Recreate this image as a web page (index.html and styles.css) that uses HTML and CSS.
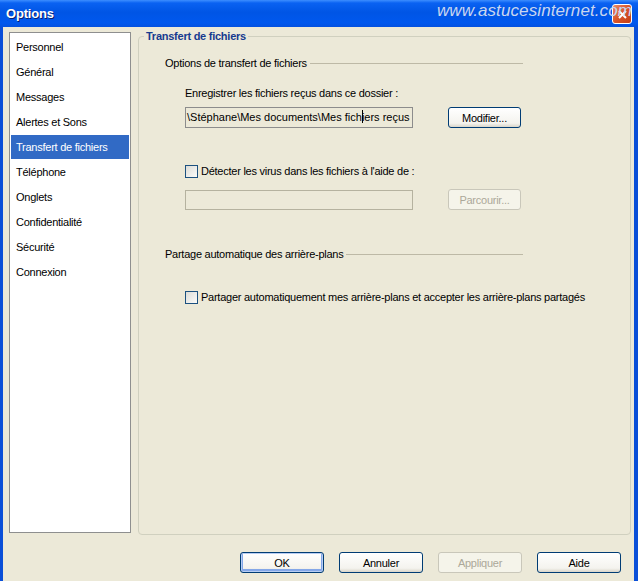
FILE: index.html
```html
<!DOCTYPE html>
<html lang="fr">
<head>
  <meta charset="UTF-8">
  <title>Options</title>
  <link rel="stylesheet" href="styles.css">
</head>
<body>
  <div class="window">
    <div class="titlebar">
      <span class="title">Options</span>
      <span class="close-btn">
        <svg width="13" height="13" viewBox="0 0 13 13"><path d="M3 3 L10 10 M10 3 L3 10" stroke="#fff" stroke-width="2"/></svg>
      </span>
      <span class="watermark">www.astucesinternet.com</span>
    </div>

    <div class="frame">
      <div class="main">
        <ul class="nav">
          <li>Personnel</li>
          <li>Général</li>
          <li>Messages</li>
          <li>Alertes et Sons</li>
          <li class="selected">Transfert de fichiers</li>
          <li>Téléphone</li>
          <li>Onglets</li>
          <li>Confidentialité</li>
          <li>Sécurité</li>
          <li>Connexion</li>
        </ul>

        <fieldset class="group">
          <legend>Transfert de fichiers</legend>

          <div class="section">
            <div class="section-head"><span>Options de transfert de fichiers</span><span class="rule"></span></div>

            <div class="indent">
              <div class="label first-label">Enregistrer les fichiers reçus dans ce dossier :</div>
              <div class="field-row">
                <div class="textbox readonly">\Stéphane\Mes documents\Mes fich<span class="caret"></span>iers reçus</div>
                <button class="btn small">Modifier...</button>
              </div>

              <div class="check-row virus-row">
                <span class="checkbox"></span>
                <span>Détecter les virus dans les fichiers à l'aide de :</span>
              </div>
              <div class="field-row disabled-row">
                <div class="textbox disabled"></div>
                <button class="btn small" disabled>Parcourir...</button>
              </div>
            </div>

            <div class="section-head share-head"><span>Partage automatique des arrière-plans</span><span class="rule"></span></div>

            <div class="indent">
              <div class="check-row share-row">
                <span class="checkbox"></span>
                <span>Partager automatiquement mes arrière-plans et accepter les arrière-plans partagés</span>
              </div>
            </div>
          </div>
        </fieldset>
      </div>

      <div class="buttons">
        <button class="btn default">OK</button>
        <button class="btn">Annuler</button>
        <button class="btn" disabled>Appliquer</button>
        <button class="btn">Aide</button>
      </div>
    </div>
  </div>
</body>
</html>
```

FILE: styles.css
```css
* {
  box-sizing: border-box;
}

body {
  margin: 0;
  background: #ece9d8;
  font-family: 'Liberation Sans', Arial, sans-serif;
  font-size: 11px;
  letter-spacing: -0.25px;
  color: #000;
}

.window {
  width: 638px;
  height: 581px;
  overflow: hidden;
}

.titlebar {
  position: relative;
  height: 27px;
  display: flex;
  align-items: center;
  padding: 0 6px 0 6px;
  background: linear-gradient(to bottom, #3d8eff 0, #0a62f2 3px, #0055e5 45%, #0058ee 85%, #0351e0 100%);
}

.title {
  flex: 1;
  color: #fff;
  font-weight: bold;
  font-size: 13px;
  letter-spacing: -0.2px;
  text-shadow: 1px 1px 0 #0a1e70;
}

.close-btn {
  width: 20px;
  height: 20px;
  margin-top: 1px;
  border: 1px solid #fff;
  border-radius: 3px;
  background: linear-gradient(135deg, #e98a6a, #d8542a 50%, #c33f16);
  display: flex;
  align-items: center;
  justify-content: center;
}

.watermark {
  position: absolute;
  right: 6px;
  top: 1px;
  color: #c9d6ef;
  font-style: italic;
  font-size: 17px;
  letter-spacing: 0.1px;
}

.frame {
  height: 554px;
  border-left: 3px solid #0a4fd8;
  border-right: 4px solid #0a4fd8;
}

.main {
  display: flex;
  padding: 3px 0 0 6px;
}

.nav {
  list-style: none;
  margin: 2px 0 0 0;
  padding: 2px 1px;
  width: 122px;
  height: 501px;
  background: #fff;
  border: 1px solid #8e8f8f;
}

.nav li {
  height: 24px;
  line-height: 25px;
  margin-bottom: 1px;
  padding-left: 5px;
  white-space: nowrap;
}

.nav li.selected {
  background: #316ac5;
  color: #fff;
}

.group {
  margin: 0 0 0 7px;
  padding: 0;
  width: 493px;
  height: 505px;
  border: 1px solid #d0d0bf;
  border-radius: 4px;
  min-width: 0;
}

.group legend {
  margin-left: 5px;
  padding: 0 2px;
  line-height: 13px;
  font-weight: bold;
  color: #163b8f;
}

.section {
  padding-left: 26px;
}

.section-head {
  display: flex;
  align-items: center;
  width: 358px;
  margin-top: 13px;
  line-height: 14px;
}

.section-head .rule {
  flex: 1;
  height: 0;
  border-top: 1px solid #bdb9a6;
  margin-left: 3px;
}

.share-head {
  margin-top: 37px;
}

.indent {
  padding-left: 20px;
}

.label {
  line-height: 14px;
}

.first-label {
  margin-top: 16px;
}

.field-row {
  display: flex;
  align-items: center;
  margin-top: 7px;
  height: 21px;
}

.disabled-row {
  margin-top: 11px;
}

.textbox {
  width: 228px;
  height: 21px;
  border: 1px solid #8c8c8c;
  padding: 0 1px;
  line-height: 19px;
  letter-spacing: 0;
  white-space: nowrap;
  overflow: hidden;
}

.textbox.readonly {
  background: #ece9d8;
}

.textbox.disabled {
  height: 20px;
  background: #ece9d8;
  border-color: #b5b29f;
}

.caret {
  display: inline-block;
  width: 1px;
  height: 13px;
  margin-right: -1px;
  vertical-align: -2px;
  background: #000;
}

.check-row {
  display: flex;
  align-items: center;
  line-height: 14px;
  white-space: nowrap;
}

.virus-row {
  margin-top: 36px;
}

.share-row {
  margin-top: 29px;
}

.checkbox {
  flex: none;
  width: 13px;
  height: 13px;
  margin-right: 3px;
  border: 1px solid #1c5180;
  background: linear-gradient(135deg, #dcdcd7, #fbfbf9);
}

.btn {
  width: 84px;
  height: 21px;
  padding: 0;
  font-family: inherit;
  font-size: 11px;
  letter-spacing: -0.25px;
  color: #000;
  border: 1px solid #003c74;
  border-radius: 3px;
  background: linear-gradient(to bottom, #ffffff, #f4f3ee 80%, #d9d5c9);
}

.btn.small {
  width: 73px;
  margin-left: 35px;
}

.btn:disabled {
  color: #aca899;
  border-color: #c9c7ba;
  background: #f5f4ea;
}

.btn.default {
  box-shadow: inset 0 0 0 1px #b7cdf3, inset 0 -1px 0 2px #84a7e8;
}

.buttons {
  display: flex;
  justify-content: flex-end;
  gap: 15px;
  margin-top: 17px;
  padding-right: 13px;
}
```
